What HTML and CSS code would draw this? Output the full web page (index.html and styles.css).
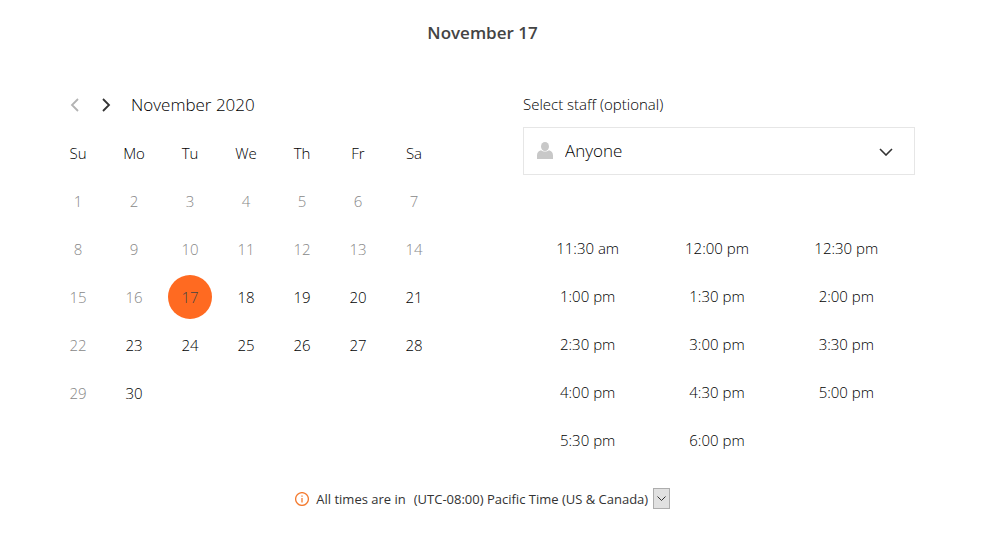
FILE: index.html
```html
<!DOCTYPE html>
<html lang="en">
<head>
    <meta charset="UTF-8">
    <meta name="viewport" content="width=device-width, initial-scale=1.0">
    <title>Select a time</title>
    <link rel="stylesheet" href="styles.css">
</head>
<body>
    <main class="booking">
        <h1>November 17</h1>

        <div class="columns">
            <section class="calendar">
                <div class="month-nav">
                    <button type="button" aria-label="Previous month" disabled>
                        <svg width="10" height="14" viewBox="0 0 10 14"><path d="M8 1 2 7l6 6"/></svg>
                    </button>
                    <button type="button" aria-label="Next month">
                        <svg width="10" height="14" viewBox="0 0 10 14"><path d="M2 1l6 6-6 6"/></svg>
                    </button>
                    <h2>November 2020</h2>
                </div>
                <table>
                    <thead>
                        <tr><th>Su</th><th>Mo</th><th>Tu</th><th>We</th><th>Th</th><th>Fr</th><th>Sa</th></tr>
                    </thead>
                    <tbody>
                        <tr>
                            <td class="off">1</td><td class="off">2</td><td class="off">3</td><td class="off">4</td><td class="off">5</td><td class="off">6</td><td class="off">7</td>
                        </tr>
                        <tr>
                            <td class="off">8</td><td class="off">9</td><td class="off">10</td><td class="off">11</td><td class="off">12</td><td class="off">13</td><td class="off">14</td>
                        </tr>
                        <tr>
                            <td class="off">15</td><td class="off">16</td><td><button type="button" class="selected">17</button></td><td><button type="button">18</button></td><td><button type="button">19</button></td><td><button type="button">20</button></td><td><button type="button">21</button></td>
                        </tr>
                        <tr>
                            <td class="off">22</td><td><button type="button">23</button></td><td><button type="button">24</button></td><td><button type="button">25</button></td><td><button type="button">26</button></td><td><button type="button">27</button></td><td><button type="button">28</button></td>
                        </tr>
                        <tr>
                            <td class="off">29</td><td><button type="button">30</button></td><td></td><td></td><td></td><td></td><td></td>
                        </tr>
                    </tbody>
                </table>
            </section>

            <section class="details">
                <label for="staff">Select staff (optional)</label>
                <div class="staff-box">
                    <select id="staff">
                        <option>Anyone</option>
                    </select>
                    <svg class="person" width="16" height="17" viewBox="0 0 16 17"><ellipse cx="8" cy="4.500" rx="4" ry="4.500"/><path d="M0 17v-3.500C0 10.500 1.500 9 4 8.200c2 1.700 6 1.700 8 0 2.500.8 4 2.300 4 5.300V17z"/></svg>
                    <svg class="chevron" width="14" height="8" viewBox="0 0 14 8"><path d="M1 1l6 6 6-6"/></svg>
                </div>
                <div class="times">
                    <button type="button">11:30 am</button>
                    <button type="button">12:00 pm</button>
                    <button type="button">12:30 pm</button>
                    <button type="button">1:00 pm</button>
                    <button type="button">1:30 pm</button>
                    <button type="button">2:00 pm</button>
                    <button type="button">2:30 pm</button>
                    <button type="button">3:00 pm</button>
                    <button type="button">3:30 pm</button>
                    <button type="button">4:00 pm</button>
                    <button type="button">4:30 pm</button>
                    <button type="button">5:00 pm</button>
                    <button type="button">5:30 pm</button>
                    <button type="button">6:00 pm</button>
                </div>
            </section>
        </div>

        <div class="timezone">
            <svg class="info" width="14" height="14" viewBox="0 0 14 14"><circle cx="7" cy="7" r="6.400"/><path d="M7 6v4.500M7 3.500v1.300"/></svg>
            <label for="zone">All times are in</label>
            <div class="zone-box">
                <select id="zone">
                    <option>(UTC-08:00) Pacific Time (US &amp; Canada)</option>
                </select>
                <span class="arrow">
                    <svg width="9" height="6" viewBox="0 0 9 6"><path d="M.5.500l4 4 4-4"/></svg>
                </span>
            </div>
        </div>
    </main>
</body>
</html>
```
FILE: styles.css
```css
* {
    box-sizing: border-box;
}
body {
    margin: 0;
    padding: 0 19px 0 0;
    font-family: "Open Sans", "Noto Sans", sans-serif;
    font-size: 15px;
    font-weight: 300;
    line-height: 24px;
    color: #000;
    background: #fff;
}
button,
select {
    font: inherit;
    color: inherit;
    background: none;
    border: none;
    border-radius: 0;
    padding: 0;
    cursor: pointer;
}
select {
    appearance: none;
}
svg {
    display: block;
    fill: none;
    stroke: #333;
    stroke-width: 2;
}
.booking {
    max-width: 865px;
    margin: 0 auto;
    padding-top: 21px;
}
h1 {
    margin: 0 0 47px;
    font-size: 17px;
    font-weight: 600;
    text-align: center;
    color: #444;
}
h2 {
    margin: 0;
    font-size: 17px;
    font-weight: 300;
}
.columns {
    display: grid;
    grid-template-columns: 1fr 1fr;
    gap: 81px;
}

/* calendar */
.month-nav {
    display: flex;
    align-items: center;
    height: 26px;
    margin-bottom: 11px;
    padding-left: 20px;
}
.month-nav button {
    width: 10px;
    margin-right: 21px;
}
.month-nav h2 {
    margin-left: -1px;
}
.month-nav svg {
    stroke-width: 1.800;
}
.month-nav button:disabled svg {
    stroke: #b3b3b3;
}
table {
    width: 100%;
    table-layout: fixed;
    border-collapse: collapse;
    text-align: center;
}
th,
td {
    height: 48px;
    padding: 0;
    font-weight: 300;
}
.off {
    color: #888;
}
td button {
    display: block;
    width: 44px;
    height: 44px;
    margin: 0 auto;
    border-radius: 50%;
}
.selected {
    background: #ff6a21;
    color: #444;
}

/* staff and time slots */
.details label {
    display: block;
    margin-bottom: 11px;
}
.staff-box {
    position: relative;
    margin-bottom: 49px;
}
.staff-box select {
    display: block;
    width: 100%;
    height: 48px;
    padding-left: 41px;
    border: 1px solid #e6e6e6;
    font-size: 17px;
}
.staff-box svg {
    position: absolute;
    pointer-events: none;
}
.person {
    left: 14px;
    top: 15px;
    fill: #c8c8c8;
    stroke: none;
}
.chevron {
    right: 22px;
    top: 21px;
    stroke-width: 1.600;
}
.times {
    display: grid;
    grid-template-columns: repeat(3, 1fr);
    grid-auto-rows: 48px;
    padding-right: 4px;
}

/* timezone */
.timezone {
    display: flex;
    justify-content: center;
    align-items: center;
    margin-top: 23px;
    font-size: 13px;
    font-weight: 400;
    color: #333;
}
.info {
    margin-right: 7px;
    stroke: #f47b30;
    stroke-width: 1.300;
}
.timezone label {
    margin-right: 8px;
}
.zone-box {
    position: relative;
}
.zone-box select {
    display: block;
    height: 24px;
    padding-right: 21px;
}
.arrow {
    position: absolute;
    right: 0;
    top: 1px;
    display: flex;
    align-items: center;
    justify-content: center;
    width: 17px;
    height: 21px;
    background: #e1e1e1;
    border: 1px solid #adadad;
    pointer-events: none;
}
.arrow svg {
    stroke-width: 1;
}
```
